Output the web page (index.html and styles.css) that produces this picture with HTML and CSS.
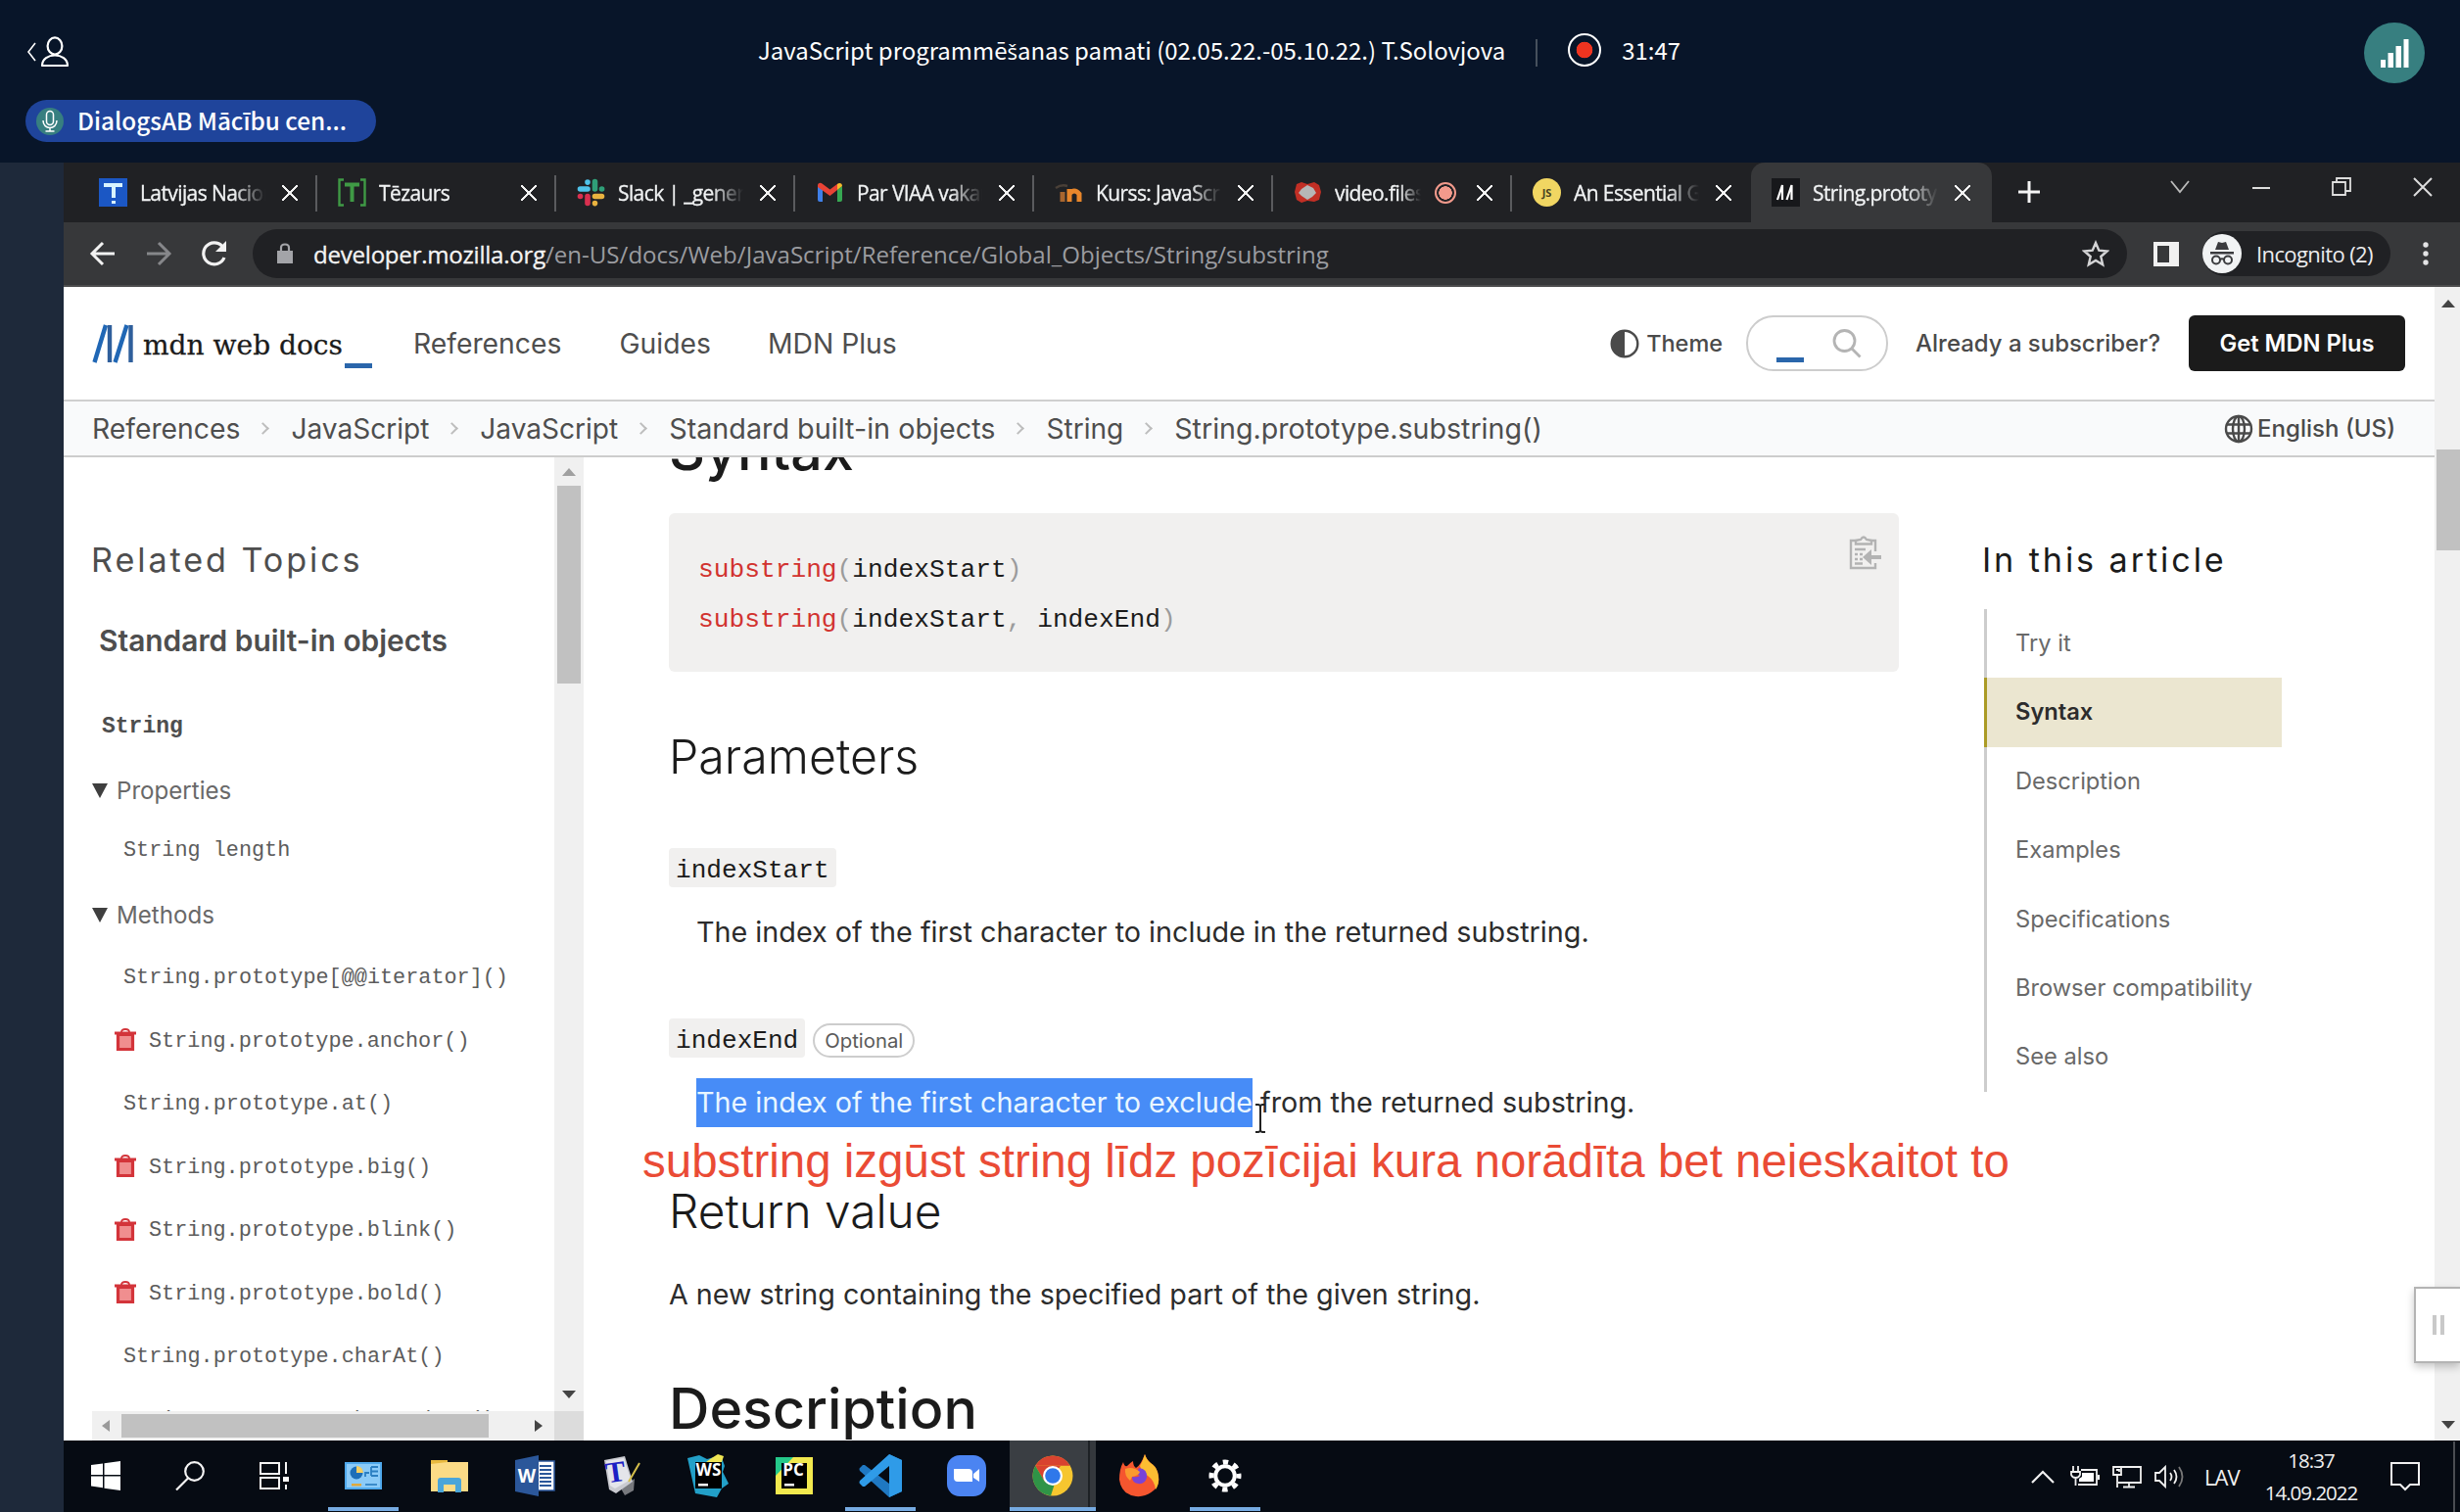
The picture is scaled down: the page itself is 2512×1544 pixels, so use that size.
FILE: index.html
```
<!DOCTYPE html>
<html lang="lv">
<head>
<meta charset="utf-8">
<title>JavaScript programmēšanas pamati</title>
<link rel="stylesheet" href="styles.css">
</head>
<body>
<div class="meeting">
  <header class="topbar">
    <div class="topbar-row">
      <svg class="users" width="46" height="34" viewBox="0 0 46 34" fill="none" stroke="#fff"><path d="M10 8 3 17l7 9" stroke-width="1.6"/><ellipse cx="30" cy="11" rx="7.4" ry="8.6" stroke-width="2.2"/><path d="M17 31c0-14 26-14 26 0z" stroke-width="2.2" stroke-linejoin="round"/></svg>
      <div class="session">
        <span class="session-title">JavaScript programmē<span class="caron">š</span>anas pamati (02.05.22.-05.10.22.) T.Solovjova</span>
        <span class="session-sep"></span>
        <span class="rec"></span>
        <span class="timer">31:47</span>
      </div>
      <div class="signal"><svg width="30" height="30" viewBox="0 0 30 30" fill="#fff"><path d="M1 22h5v8H1zM8.500 15h5.500v15H8.500zM16.500 8h5.500v22h-5.500zM24.500 1h5v29h-5z"/></svg></div>
    </div>
    <div class="talker">
      <span class="mic"><svg width="18" height="24" viewBox="0 0 18 24" fill="none" stroke="#fff" stroke-width="1.500"><rect x="5.500" y="1.500" width="7" height="14" rx="3.500"/><path d="M2 11c0 10 14 10 14 0M9 18.500V22M4.500 22h9"/></svg></span>
      <span>DialogsAB Mācību cen...</span>
    </div>
  </header>

  <div class="share">
    <div class="tabs">
      <div class="tab"><svg class="fav" viewBox="0 0 29 29"><path fill="#1b57c4" d="M0 0h29v29H0z"/><path d="M5 5h19v4h-7v11h-4V9H5zM13 23h4v3h-4z" fill="#d8f3ff"/></svg><span class="tab-title">Latvijas Nacionālā</span><i class="x"></i></div>
      <div class="tab"><svg class="fav" viewBox="0 0 29 29" fill="none" stroke="#3f9a45"><path d="M6 1.500H1.500v26H6M23 1.500h4.500v26H23" stroke-width="2.400"/><path d="M7 6.500h15M14.500 6v18" stroke-width="4"/></svg><span class="tab-title">Tēzaurs</span><i class="x"></i></div>
      <div class="tab"><svg class="fav" viewBox="0 0 29 29" stroke-width="5.600" stroke-linecap="round"><path d="M11 4v.1M11 11H3.500" stroke="#4fc3ea"/><path d="M18.500 3.500V11M25.500 11h.1" stroke="#2f9f78"/><path d="M18.500 25.500v.1M18.500 18.500h7" stroke="#e9b23f"/><path d="M11 18.500v7M3.500 18.500h.1" stroke="#d9304f"/></svg><span class="tab-title">Slack | _general</span><i class="x"></i></div>
      <div class="tab"><svg class="fav" viewBox="0 0 29 29"><path fill="#3f7fe8" d="M2 8l5 4v12H4q-2 0-2-2z"/><path fill="#37a852" d="M27 8l-5 4v12h3q2 0 2-2z"/><path fill="#e94335" d="M2 9V7.500C2 5 4.500 4 6.500 5.500l8 6 8-6C24.500 4 22 5.500 22 6v6l-7.500 6z"/><path fill="#f6bb2c" d="M22 12V6c2.500-2 5-.5 5 2z"/></svg><span class="tab-title">Par VIAA vakances</span><i class="x"></i></div>
      <div class="tab"><svg class="fav" viewBox="0 0 29 29" fill="none" stroke="#e8862b" stroke-width="5"><path d="M8 24V14" stroke="#a8662f"/><path d="M15 24V11M15 16q5-6 10 0v8"/><path d="M1 10q6-4 12-2" stroke="#4a4038" stroke-width="2.500"/></svg><span class="tab-title">Kurss: JavaScript</span><i class="x"></i></div>
      <div class="tab rec-tab"><svg class="fav" viewBox="0 0 29 29"><path fill="#c22f25" d="M3 6l5-2 6 2 7-2 5 3 2 7-2 8-5 2-7-1-6 2-5-3-2-8z"/><path fill="#b6b6b6" d="M8 11l6-4 6 3 3 5-4 4-5 3-6-4-3-3z"/></svg><span class="tab-title">video.files.fm</span><i class="cast"></i><i class="x"></i></div>
      <div class="tab nosep"><svg class="fav" viewBox="0 0 29 29"><circle cx="14.500" cy="14.500" r="14.500" fill="#f1d662"/><text x="14.500" y="19" text-anchor="middle" class="js">JS</text></svg><span class="tab-title">An Essential Guide</span><i class="x"></i></div>
      <div class="tab active"><svg class="fav" viewBox="0 0 29 29"><path fill="#17181b" d="M0 0h29v29H0z"/><path d="M6 22l5-15v15M15.500 22l5-15v15" stroke="#fff" stroke-width="2.200" fill="none"/></svg><span class="tab-title">String.prototype</span><i class="x"></i></div>
      <svg class="plus" width="24" height="24" viewBox="0 0 24 24" stroke="#f4f4f4" stroke-width="3"><path d="M12 1v22M1 12h22"/></svg>
      <div class="winctl">
        <svg width="24" height="24" viewBox="0 0 24 24" fill="none" stroke="#bbb" stroke-width="1.800"><path d="M3 6l9 11 9-11"/></svg>
        <svg width="24" height="24" viewBox="0 0 24 24" stroke="#ddd" stroke-width="2"><path d="M3 13h18"/></svg>
        <svg width="24" height="24" viewBox="0 0 24 24" fill="none" stroke="#ddd" stroke-width="1.800"><path d="M3 7h13v13H3zM7 7V3h14v13h-5"/></svg>
        <svg width="24" height="24" viewBox="0 0 24 24" stroke="#ddd" stroke-width="2"><path d="M3 3l18 18M21 3L3 21"/></svg>
      </div>
    </div>

    <div class="toolbar">
      <svg class="back" width="28" height="28" viewBox="0 0 28 28" fill="none" stroke="#f2f2f2" stroke-width="3"><path d="M26 14H4M14 3L3 14l11 11"/></svg>
      <svg class="fwd" width="28" height="28" viewBox="0 0 28 28" fill="none" stroke="#86878a" stroke-width="3"><path d="M2 14h22M14 3l11 11-11 11"/></svg>
      <svg class="reload" width="28" height="28" viewBox="0 0 28 28" fill="none" stroke="#f2f2f2" stroke-width="3.200"><path d="M24 18A11 11 0 1 1 22 6.500"/><path d="M26 1v11H15z" fill="#f2f2f2" stroke="none"/></svg>
      <div class="omnibox">
        <svg width="16" height="22" viewBox="0 0 16 22"><path d="M0 8h16v13H0z" fill="#a3a4a8"/><path d="M4 8V5q0-3.500 4-3.500T12 5v3" fill="none" stroke="#a3a4a8" stroke-width="2.200"/></svg>
        <span class="url"><b>developer.mozilla.org</b>/en-US/docs/Web/JavaScript/Reference/Global_Objects/String/substring</span>
        <svg class="star" width="28" height="28" viewBox="0 0 28 28" fill="none" stroke="#d4d4d6" stroke-width="2.400"><path d="M14 3l3.300 7.700 8.200.8-6.200 5.500 1.900 8.200L14 21l-7.200 4.200L8.700 17 2.500 11.500l8.200-.8z"/></svg>
      </div>
      <i class="panel"></i>
      <div class="incognito">
        <svg width="40" height="40" viewBox="0 0 40 40"><circle cx="20" cy="20" r="20" fill="#f1f3f4"/><path fill="#3a3b3e" d="M13 16l3-8 4 1 4-1 3 8zM8 18h24v2.400H8z"/><g fill="none" stroke="#3a3b3e" stroke-width="2"><circle cx="14" cy="26.500" r="4"/><circle cx="26" cy="26.500" r="4"/><path d="M18 26q2-1.500 4 0"/></g></svg>
        <span>Incognito (2)</span>
      </div>
      <svg class="dots" width="6" height="24" viewBox="0 0 6 24" fill="#e4e4e6"><circle cx="3" cy="3" r="2.700"/><circle cx="3" cy="12" r="2.700"/><circle cx="3" cy="21" r="2.700"/></svg>
    </div>

    <div class="viewport">
      <div class="page">
        <div class="mdn-head">
          <svg class="mark" width="44" height="40" viewBox="0 0 44 40" fill="none" stroke="#2067b5" stroke-width="4.400"><path d="M3.500 39L15 1M24.500 39L36.500 1"/><path d="M19 1v38M40.500 1v38" stroke="#2f5f9c"/></svg>
          <span class="brand">mdn web docs</span><i class="us brand-us"></i>
          <span class="nav n1">References</span><span class="nav n2">Guides</span><span class="nav n3">MDN Plus</span>
          <div class="mdn-right">
            <svg width="30" height="30" viewBox="0 0 30 30"><circle cx="15" cy="15" r="13.300" fill="#fff" stroke="#4a4a4a" stroke-width="2.400"/><path d="M15 1a14 14 0 0 0 0 28z" fill="#4a4a4a"/></svg>
            <span class="theme">Theme</span>
            <div class="search"><i class="us"></i><svg width="30" height="32" viewBox="0 0 30 32" fill="none" stroke="#b4b4b4" stroke-width="2.800"><circle cx="12.500" cy="13" r="10.500"/><path d="M20 21l8.500 8.500"/></svg></div>
            <span class="subscriber">Already a subscriber?</span>
            <span class="get">Get MDN Plus</span>
          </div>
        </div>
        <div class="crumbs">
          <span class="c1">References</span><i class="gt"></i><span class="c2">JavaScript</span><i class="gt"></i><span class="c2">JavaScript</span><i class="gt"></i><span>Standard built-in objects</span><i class="gt"></i><span class="c2">String</span><i class="gt"></i><span class="c3">String.prototype.substring()</span>
          <div class="lang"><svg width="30" height="30" viewBox="0 0 30 30" fill="none" stroke="#4a4a4a" stroke-width="2.400"><circle cx="15" cy="15" r="13"/><ellipse cx="15" cy="15" rx="6" ry="13"/><path d="M15 2v26M3 10.500h24M3 19.500h24"/></svg><span>English (US)</span></div>
        </div>

        <div class="content">
          <div class="sidebar">
            <div class="side-scroll">
              <div class="side-title">Related Topics</div>
              <div class="side-sub">Standard built-in objects</div>
              <div class="side-root">String</div>
              <div class="group g1"><i class="tri"></i>Properties</div>
              <div class="item first">String length</div>
              <div class="group g2"><i class="tri"></i>Methods</div>
              <div class="items">
                <div class="item">String.prototype[@@iterator]()</div>
                <div class="item dep"><svg class="bin" viewBox="0 0 22 24"><path d="M7 4q0-3 4-3t4 3" fill="none" stroke="#d3343a" stroke-width="1.800"/><path fill="#d3343a" d="M0 3.500h22v3H0z"/><path d="M3.500 6.500h15v15h-15z" fill="#f08e8f" stroke="#d3343a" stroke-width="3.200"/></svg>String.prototype.anchor()</div>
                <div class="item">String.prototype.at()</div>
                <div class="item dep"><svg class="bin" viewBox="0 0 22 24"><path d="M7 4q0-3 4-3t4 3" fill="none" stroke="#d3343a" stroke-width="1.800"/><path fill="#d3343a" d="M0 3.500h22v3H0z"/><path d="M3.500 6.500h15v15h-15z" fill="#f08e8f" stroke="#d3343a" stroke-width="3.200"/></svg>String.prototype.big()</div>
                <div class="item dep"><svg class="bin" viewBox="0 0 22 24"><path d="M7 4q0-3 4-3t4 3" fill="none" stroke="#d3343a" stroke-width="1.800"/><path fill="#d3343a" d="M0 3.500h22v3H0z"/><path d="M3.500 6.500h15v15h-15z" fill="#f08e8f" stroke="#d3343a" stroke-width="3.200"/></svg>String.prototype.blink()</div>
                <div class="item dep"><svg class="bin" viewBox="0 0 22 24"><path d="M7 4q0-3 4-3t4 3" fill="none" stroke="#d3343a" stroke-width="1.800"/><path fill="#d3343a" d="M0 3.500h22v3H0z"/><path d="M3.500 6.500h15v15h-15z" fill="#f08e8f" stroke="#d3343a" stroke-width="3.200"/></svg>String.prototype.bold()</div>
                <div class="item">String.prototype.charAt()</div>
                <div class="item">String.prototype.charCodeAt()</div>
              </div>
            </div>
            <div class="hbar"><i class="arr left"></i><i class="hthumb"></i><i class="arr right"></i></div>
          </div>
          <div class="vbar"><i class="arr up light"></i><i class="vthumb"></i><i class="arr down"></i><i class="corner"></i></div>

          <div class="article">
            <h2 class="h-syntax">Syntax</h2>
            <div class="code">
              <pre><em>substring</em><s>(</s>indexStart<s>)</s>
<em>substring</em><s>(</s>indexStart<s>,</s> indexEnd<s>)</s></pre>
              <svg width="34" height="36" viewBox="0 0 34 36" fill="none" stroke="#b3b3b3" stroke-width="2.400"><path d="M27 17V6H2v28h25v-5"/><path d="M7 9.500h16V6l-5-1q-3-5-6 0L7 6z" fill="#f1f0ef"/><path d="M6 15h11M6 20h3M11 20h3M6 25h3M11 25h3M6 29.500h8"/><path d="M33 23H18" stroke-width="4"/><path d="M14 23l9-8v16z" fill="#b3b3b3" stroke="none"/></svg>
            </div>
            <h3 class="h-params">Parameters</h3>
            <div class="term t1"><code>indexStart</code></div>
            <p class="def">The index of the first character to include in the returned substring.</p>
            <div class="term t2"><code>indexEnd</code><span class="opt">Optional</span></div>
            <p class="def d2"><mark>The index of the first character to exclude</mark> from the returned substring.</p>
            <h3 class="h-return">Return value</h3>
            <p class="ret">A new string containing the specified part of the given string.</p>
            <h2 class="h-desc">Description</h2>
          </div>

          <div class="toc">
            <div class="toc-title">In this article</div>
            <ul>
              <li>Try it</li><li class="on">Syntax</li><li>Description</li><li>Examples</li><li>Specifications</li><li>Browser compatibility</li><li>See also</li>
            </ul>
          </div>
        </div>
      </div>
      <div class="pagebar"><i class="arr up"></i><i class="pthumb"></i><i class="arr down"></i></div>
      <div class="drawer"><i></i><i></i></div>
    </div>

    <div class="taskbar">
      <div class="app w86"><svg width="30" height="30" viewBox="0 0 30 30" fill="#fff"><path d="M0 4l12-1.600V14H0zM13.500 2.200L30 0v14H13.500zM0 15.500h12v11.800L0 25.600zM13.500 15.500H30V30l-16.500-2.200z"/></svg></div>
      <div class="app w86"><svg width="30" height="30" viewBox="0 0 30 30" fill="none" stroke="#f4f4f4" stroke-width="2.200"><circle cx="19.500" cy="10.500" r="9.300"/><path d="M13 17.500L1 29.500"/></svg></div>
      <div class="app w86"><svg width="30" height="30" viewBox="0 0 30 30" fill="none" stroke="#f4f4f4" stroke-width="2"><path d="M1 2h19v11H1zM1 17h19v11H1zM27 1v12M27 24v5"/><path d="M24 16h6v5h-6z" fill="#fff" stroke="none"/></svg></div>
      <div class="app run"><svg width="38" height="28" viewBox="0 0 38 28"><path fill="#4fa9ec" d="M0 0h38v28H0z"/><path fill="#8bcbf8" d="M2 2h34v24H2z"/><circle cx="12" cy="11" r="6.500" fill="#1d6fb8"/><path fill="#f4cf63" d="M12 11V4a7 7 0 0 1 7 7z"/><path d="M21 15v-4h4M27 5h7M27 9.500h7M27 14h7M27 5v9" stroke="#2b7fc2" stroke-width="1.800" fill="none"/><path fill="#e0a93b" d="M7 22h10v2.500H7z"/><path fill="#3b8ccb" d="M21 22h12v2H21z"/></svg></div>
      <div class="app"><svg width="40" height="34" viewBox="0 0 40 34"><path fill="#e8b93f" d="M1 1h17v5H1z"/><path fill="#fbdb86" d="M1 5l17-2h21v30H1z"/><path fill="#4aa5d9" d="M8 34V22q0-3 3-3h18q3 0 3 3v12h-6v-8H14v8z"/></svg></div>
      <div class="app"><svg width="42" height="42" viewBox="0 0 42 42"><path fill="#fff" stroke="#2b579a" stroke-width="1.500" d="M22 6h18v30H22z"/><path d="M25 11h12M25 15h12M25 19h12M25 23h12M25 27h12M25 31h12" stroke="#2b579a" stroke-width="2"/><path fill="#2b579a" d="M0 5l24-5v42L0 37z"/><text x="12" y="28" text-anchor="middle" class="word">W</text></svg></div>
      <div class="app"><svg width="42" height="42" viewBox="0 0 42 42"><path fill="#77797e" d="M20 34l14-10-1 12-9 5z"/><path fill="#c9cad0" d="M3 5l21-4 8 26-17 12-7-4z"/><path fill="#e4e5ea" d="M5 6l18-3 7 22-16 9-5-3z"/><path d="M39 8L28 27" stroke="#d6c04c" stroke-width="2"/><text x="15" y="27" text-anchor="middle" class="tee" transform="rotate(-8 16 20)">T</text></svg></div>
      <div class="app"><svg width="44" height="44" viewBox="0 0 44 44"><path fill="#22a0c8" d="M1 4l12-3 8 4 14-4 4 11-2 6 6 12-7 5-5 9-22-4z"/><path fill="#efe553" d="M24 5l8-5 6 2-2 6H20z"/><path fill="#000" d="M9 8h27v27H9z"/><text x="22.500" y="22" text-anchor="middle" class="ide">WS</text><path fill="#fff" d="M12 30h10v2.500H12z"/></svg></div>
      <div class="app"><svg width="40" height="40" viewBox="0 0 40 40"><path fill="#f2e94e" d="M1 1h38v38H1z"/><path fill="#25c98a" d="M1 1h18L1 20z"/><path fill="#000" d="M7 7h26v26H7z"/><text x="19" y="20" text-anchor="middle" class="ide">PC</text><path fill="#fff" d="M10 28h10v2.500H10z"/></svg></div>
      <div class="app run"><svg width="44" height="44" viewBox="0 0 44 44"><path fill="#1f78c2" d="M31 0l13 6v32l-13 6L1 17q-1-2 0-3l3-3h2l25 19z"/><path fill="#2f9be8" d="M31 0l13 6v32l-13 6V12L6 33H4l-3-3q-1-1 0-3z"/></svg></div>
      <div class="app"><svg width="42" height="42" viewBox="0 0 42 42"><rect x="1" y="0" width="40" height="42" rx="13" fill="#4b84f2"/><path fill="#fff" d="M8 14h15q4 0 4 4v9H12q-4 0-4-4zM28 19l6-5v13l-6-4z"/></svg></div>
      <div class="app run current"><svg width="42" height="42" viewBox="0 0 42 42"><circle cx="21" cy="21" r="20.500" fill="#f6c62f"/><path fill="#d9432f" d="M3.200 10.800A20.500 20.500 0 0 1 38.800 10.800H21z"/><path fill="#d9432f" d="M3.200 10.800L12 26l9-5 8-10z"/><path fill="#2f9447" d="M3.200 10.800L12.500 26.500l10 4L19 41.400A20.500 20.500 0 0 1 3.200 10.800z"/><circle cx="21" cy="21" r="10" fill="#fff"/><circle cx="21" cy="21" r="7.800" fill="#2f78ea"/></svg></div>
      <div class="app"><svg width="42" height="44" viewBox="0 0 42 44"><path fill="#f5562f" d="M5 8q1 5 4 4 4-4 6-5 0 5 3 7 5-3 9-14 2 6 6 9 5 3 7 9 4 12-4 19-8 7-18 6Q3 41 1 26 1 15 5 8z"/><path fill="#fdbd32" d="M27 0q2 6 6 9 5 3 7 9 3 11-2 18-1-9-8-14-6-4-8-10 3-5 5-12z"/><path fill="#7a43d6" d="M21 14q9 1 8 10-2 7-9 6-6-1-6-7 5 1 8-1-3-1-3-3z"/><path fill="#fa9a2e" d="M7 15q8-3 15 3-1 4-8 5l-2 4q-6-5-5-12z"/></svg></div>
      <div class="app run"><svg width="34" height="34" viewBox="0 0 34 34" fill="none" stroke="#fff"><circle cx="17" cy="17" r="9.800" stroke-width="4"/><circle cx="17" cy="17" r="14" stroke-width="5" stroke-dasharray="5.500 5.496" stroke-dashoffset="2.700"/></svg></div>
      <div class="tray">
        <svg width="24" height="14" viewBox="0 0 24 14" fill="none" stroke="#f0f0f0" stroke-width="2.200"><path d="M1 13L12 2l11 11"/></svg>
        <svg class="bat" width="30" height="22" viewBox="0 0 30 22" fill="none" stroke="#f0f0f0" stroke-width="1.800"><path d="M3 0v6M8 0v6M1 6h9v3q-1 3-4.500 3T1 9zM5.500 12v8"/><path d="M11 4h16v15H8"/><path d="M12 7h12v9H9v-3l3-2zM28 9h2v5h-2z" fill="#fff" stroke="none"/></svg>
        <svg class="net" width="30" height="24" viewBox="0 0 30 24" fill="none" stroke="#f0f0f0" stroke-width="1.800"><path d="M9 2h20v16H6M1 2h8v8H1zM4 5h3v2M5 10v13M17 18v4M11 22.500h12"/></svg>
        <svg class="vol" width="30" height="24" viewBox="0 0 30 24" fill="none" stroke="#f0f0f0" stroke-width="1.800"><path d="M1 8h4l6-6v20l-6-6H1z"/><path d="M16 8q3 4 0 8M20 5q5 7 0 14"/><path d="M25 2q7 10 0 20" stroke="#777"/></svg>
        <span class="lav">LAV</span>
        <div class="clock"><span>18:37</span><span>14.09.2022</span></div>
        <svg class="note" width="30" height="30" viewBox="0 0 30 30" fill="none" stroke="#f0f0f0" stroke-width="2"><path d="M1 1h28v22H20l-5 5-5-5H1z"/></svg>
        <i class="peek"></i>
      </div>
    </div>

    <div class="caption">substring izgūst string līdz pozīcijai kura norādīta bet neieskaitot to</div>
    <svg class="ibeam" width="12" height="30" viewBox="0 0 12 30" fill="none" stroke="#222" stroke-width="2"><path d="M1 1h3l2 1 2-1h3M6 2v26M1 29h3l2-1 2 1h3"/></svg>
  </div>
</div>
</body>
</html>
```
FILE: styles.css
```
* { box-sizing: border-box; }
body { margin: 0; overflow: hidden; }
i, em, s { font-style: normal; text-decoration: none; }
svg { display: block; flex: none; }

.meeting { width: 2512px; height: 1544px; background: #1e293a; display: flex; flex-direction: column; overflow: hidden; }
.topbar { height: 166px; flex: none; background: #081529; color: #fff; font-family: "Noto Sans CJK SC", sans-serif; }
.topbar-row { height: 102px; display: flex; align-items: flex-start; padding: 0 36px 0 26px; }
.users { margin-top: 36px; }
.session { display: flex; align-items: center; margin-left: 702px; height: 102px; font-size: 23.94px; white-space: nowrap; }
.session-title, .timer { line-height: 40px; }
.caron { font: 22px/30px "Open Sans", sans-serif; }
.session-sep { width: 2px; height: 28px; margin: 6px 31px 0 31px; background: #46505c; }
.rec { width: 34px; height: 34px; border: 2px solid #fff; border-radius: 50%; background: radial-gradient(circle, #ee3420 8px, transparent 8.6px); margin-right: 21px; }
.signal { width: 62px; height: 62px; margin: 23px 0 0 auto; border-radius: 50%; background: #377f80; display: flex; align-items: center; justify-content: center; }
.talker { width: 358px; height: 43px; margin-left: 26px; border-radius: 21.5px; background: #1f449b; display: flex; align-items: center; gap: 14px; padding: 0 0 2px 11px; font-size: 24.32px; font-weight: 500; line-height: 36px; white-space: nowrap; }
.mic { width: 28px; height: 28px; margin-top: 2px; border-radius: 50%; background: #377f80; display: flex; align-items: center; justify-content: center; flex: none; }

.share { position: relative; flex: 1; margin-left: 65px; display: flex; flex-direction: column; min-height: 0; }
.tabs { height: 61px; flex: none; background: #202124; display: flex; padding-left: 15px; font: 21px/30px "Open Sans", sans-serif; letter-spacing: -.6px; color: #f1f3f4; }
.tab { width: 244px; height: 61px; display: flex; align-items: center; padding: 0 20px 0 21px; background: linear-gradient(#5a5b5e, #5a5b5e) no-repeat right 13px / 2px 37px; }
.tab.nosep { background: none; }
.tab.active { background: #37383a; border-radius: 14px 14px 0 0; width: 246px; padding-right: 22px; }
.fav { width: 29px; height: 29px; margin-right: 13px; }
.tab-title { width: 128px; overflow: hidden; white-space: nowrap; -webkit-text-stroke: .3px; -webkit-mask-image: linear-gradient(90deg, #000 75%, transparent); mask-image: linear-gradient(90deg, #000 75%, transparent); }
.rec-tab .tab-title { width: 88px; }
.js { font: bold 11px "Open Sans", sans-serif; fill: #4a4321; letter-spacing: 0; }
.cast { width: 22px; height: 22px; margin: 0 0 0 14px; border-radius: 50%; border: 2px solid #f29a8c; background: radial-gradient(circle, #f29a8c 6.500px, #202124 7px); }
.x { width: 16px; height: 16px; margin-left: auto; background: linear-gradient(45deg, transparent 44%, #f1f1f1 45% 55%, transparent 56%), linear-gradient(-45deg, transparent 44%, #f1f1f1 45% 55%, transparent 56%); }
.plus { margin: 18px 0 0 26px; }
.winctl { display: flex; gap: 58.500px; margin: 13px 0 0 130px; }

.toolbar { height: 66px; flex: none; background: #37383a; display: flex; align-items: center; border-bottom: 2px solid #4c4c4d; padding-left: 26px; font-family: "Open Sans", sans-serif; }
.fwd { margin-left: 29px; }
.reload { margin-left: 29px; }
.omnibox { width: 1914px; height: 50px; margin-left: 25px; border-radius: 25px; background: #202124; display: flex; align-items: center; padding: 0 18px 0 25px; }
.url { margin-left: 21px; padding-top: 1px; font-size: 24.07px; line-height: 34px; color: #9b9ca0; white-space: nowrap; }
.url b { font-weight: 400; color: #f4f4f4; letter-spacing: -.24px; -webkit-text-stroke: .3px; }
.star { margin-left: auto; }
.panel { width: 26px; height: 25px; margin-left: 27px; border: 4px solid #f1f1f1; border-right-width: 10px; }
.incognito { width: 192px; height: 46px; margin-left: 24px; border-radius: 23px; background: #202124; display: flex; align-items: center; gap: 15px; font-size: 22px; letter-spacing: -.6px; color: #ececee; white-space: nowrap; }
.dots { margin-left: 33px; }

.viewport { position: relative; flex: 1; display: flex; min-height: 0; background: #fff; }
.page { width: 2421px; display: flex; flex-direction: column; font-family: Inter, sans-serif; color: #1b1b1b; }
.mdn-head { height: 117px; flex: none; display: flex; align-items: center; border-bottom: 2px solid #cfcfcf; padding: 0 30px 0 28px; white-space: nowrap; }
.brand { margin: 4px 0 0 9px; font: 28.05px/40px "DejaVu Serif", serif; width: 206px; -webkit-text-stroke: .3px; }
.us { width: 28px; height: 5px; background: #2a66ab; flex: none; }
.brand-us { margin-top: 46px; }
.nav { font-size: 28.300px; color: #4e4e4e; padding-top: 1px; }
.n1 { margin-left: 42px; } .n2 { margin-left: 59px; } .n3 { margin-left: 58px; }
.mdn-right { display: flex; align-items: center; margin-left: auto; color: #4a4a4a; font-weight: 500; }
.theme { margin-left: 7px; font-size: 23.500px; }
.search { width: 145px; height: 57px; margin-left: 24px; border: 2px solid #cdcdcd; border-radius: 28px; display: flex; align-items: center; padding: 0 25px 0 29px; justify-content: space-between; }
.search .us { margin-top: 34px; }
.subscriber { margin-left: 28px; font-size: 23.950px; }
.get { width: 221px; height: 57px; margin-left: 29px; border-radius: 6px; background: #1b1b1b; color: #fff; font-size: 23.690px; font-weight: 600; line-height: 58px; text-align: center; }

.crumbs { height: 57px; flex: none; display: flex; align-items: center; background: #f9fafb; border-bottom: 2px solid #cdcdcd; padding: 0 40px 0 29px; font-size: 28.750px; color: #4e4e4e; white-space: nowrap; }
.c1 { font-size: 28.300px; } .c2 { font-size: 28.050px; } .c3 { font-size: 28.620px; }
.gt { width: 9px; height: 9px; margin: 0 24px 0 19px; border: solid #bdbdbd; border-width: 2px 2px 0 0; transform: rotate(45deg); }
.lang { display: flex; align-items: center; gap: 4px; margin-left: auto; font-size: 24.070px; font-weight: 500; color: #4a4a4a; }

.content { flex: 1; display: flex; min-height: 0; overflow: hidden; }
.sidebar { width: 501px; display: flex; flex-direction: column; color: #4e4e4e; padding-left: 29px; flex: none; white-space: nowrap; }
.side-scroll { height: 974px; overflow: hidden; }
.side-title { height: 60px; margin-top: 75px; font-size: 34.200px; line-height: 60px; letter-spacing: 2.900px; font-weight: 400; margin-left: -1px; }
.side-sub { margin: 27px 0 0 7px; font-size: 29.900px; font-weight: 600; line-height: 50px; }
.side-root { margin: 42.500px 0 0 10px; font: bold 23px/40px "Liberation Mono", monospace; }
.group { height: 40px; display: flex; align-items: center; font-size: 24.100px; color: #696969; }
.g1 { margin-top: 25.500px; } .g2 { margin-top: 12.500px; }
.tri { border: solid transparent; border-width: 15px 8px 0; border-top-color: #3f3f3f; margin-right: 9px; }
.item { height: 64.500px; display: flex; align-items: center; padding-left: 32px; font: 21.830px/30px "Liberation Mono", monospace; color: #5c5c5c; }
.item.first { margin-top: 10px; }
.item.dep { padding-left: 23px; }
.bin { width: 22px; height: 24px; margin: -3px 13px 0 0; }
.items { margin-top: 13.200px; }
.hbar { height: 30px; background: #f0f0f0; display: flex; align-items: center; padding: 0 12px 0 10px; }
.hthumb { width: 375px; height: 24px; background: #c1c1c1; margin-left: 12px; }
.arr { flex: none; width: 0; height: 0; border: 7px solid transparent; }
.left { border-width: 6px 8px 6px 0; border-right-color: #9a9a9a; }
.right { border-width: 6px 0 6px 8px; border-left-color: #444; margin-left: auto; }
.up { border-width: 0 7px 8px; border-bottom-color: #444; }
.up.light { border-bottom-color: #a0a0a0; }
.down { border-width: 8px 7px 0; border-top-color: #444; margin-top: auto; }
.vbar { width: 30px; flex: none; background: #f0f0f0; display: flex; flex-direction: column; align-items: center; padding-top: 11px; }
.vthumb { width: 24px; height: 202px; margin-top: 10px; background: #c1c1c1; }
.corner { width: 30px; height: 30px; margin-top: 13px; background: #dcdcdc; }

.article { width: 1256px; margin-left: 87px; flex: none; }
h2, h3, p, pre, ul { margin: 0; }
h2 { font-size: 57.350px; line-height: 60px; font-weight: 500; letter-spacing: 0; }
h3 { font-size: 48.300px; line-height: 58px; font-weight: 300; }
.h-syntax { margin-top: -38px; }
.code { height: 162px; margin-top: 35px; border-radius: 6px; background: #f1f0ef; padding: 33px 17px 0 30px; display: flex; justify-content: space-between; }
.code pre { font: 26.230px/50.600px "Liberation Mono", monospace; }
.code svg { margin-top: -11px; }
.code em { color: #d2332f; } .code s { color: #9b9b9b; }
.h-params { margin-top: 57.500px; }
.term { display: flex; height: 40px; }
.t1 { margin-top: 64.500px; } .t2 { margin-top: 63px; }
code { height: 40px; border-radius: 4px; background: #f1f0ef; padding: 6px 7px 0 7px; font: 26.100px/34px "Liberation Mono", monospace; }
.opt { width: 104px; height: 35px; margin: 5px 0 0 8px; border: 2px solid #cdcdcd; border-radius: 18px; font-size: 20.300px; line-height: 31px; text-align: center; color: #5a5a5a; }
.def, .ret { font-size: 28.740px; line-height: 50px; color: #2c2c2c; white-space: nowrap; }
.def { margin: 21px 0 0 28px; }
.d2 { margin-top: 20.500px; }
mark { display: inline-block; height: 50px; background: #478cf7; color: #e9f6ff; }
.h-return { margin-top: 57.600px; font-size: 47.800px; }
.ret { margin-top: 31px; font-size: 28.700px; }
.h-desc { margin-top: 60.500px; }

.toc { margin-left: 87px; width: 304px; }
.toc-title { height: 60px; margin-top: 75px; font-size: 34.200px; line-height: 60px; letter-spacing: 2.900px; white-space: nowrap; margin-left: -2px; }
.toc ul { list-style: none; padding: 0; margin-top: 20px; }
.toc li { height: 70.400px; border-left: 3px solid #cdcdcd; padding-left: 29px; font-size: 23.660px; line-height: 70px; color: #696969; white-space: nowrap; }
.toc .on { background: #ebe6d0; border-left-color: #ab9b25; color: #2c2c2c; font-weight: 600; }

.pagebar { width: 26px; background: #f0f0f0; display: flex; flex-direction: column; align-items: center; padding: 13px 0 12px 2px; }
.pthumb { width: 24px; height: 103px; margin-top: 145px; background: #c1c1c1; }
.drawer { position: absolute; right: 0; top: 1021px; width: 47px; height: 78px; background: #fff; border: 2px solid #b4b4b4; border-right: 0; box-shadow: 0 4px 8px rgba(0, 0, 0, .22); display: flex; align-items: center; gap: 4px; padding-left: 17px; }
.drawer i { width: 4px; height: 20px; background: #c9c9c9; }

.taskbar { height: 73px; flex: none; background: #060b13; display: flex; font-family: "Open Sans", sans-serif; color: #f0f0f0; }
.app { width: 88px; height: 72px; display: flex; align-items: center; justify-content: center; }
.w86 { width: 86px; padding-top: 0; }
.w86 + .run { margin-left: 4px; }
.run { background: linear-gradient(#76abe2, #76abe2) no-repeat center bottom / 72px 4px; }
.current { background: linear-gradient(#76abe2, #76abe2) no-repeat left bottom / 100% 4px, linear-gradient(90deg, #3a3e43 91%, #1d2125 91% 93%, #34383d 93%); }
.word { font: bold 19px "Open Sans", sans-serif; fill: #fff; }
.tee { font: bold 30px "Liberation Serif", serif; fill: #1c1fc4; }
.ide { font: bold 17px "Open Sans", sans-serif; fill: #fff; }
.tray { flex: 1; display: flex; align-items: center; justify-content: flex-start; padding-left: 779px; font-size: 20.500px; letter-spacing: -1px; }
.bat { margin-left: 16px; }
.net { margin-left: 13px; }
.vol { margin-left: 13px; }
.lav { margin-left: 21px; font-size: 22px; width: 38px; }
.clock { width: 110px; margin-left: 16px; display: flex; flex-direction: column; align-items: center; line-height: 33px; }
.note { margin-left: 26px; }
.peek { width: 2px; height: 72px; background: #4a4d52; margin-left: 34px; }

.caption { position: absolute; left: 591px; top: 990px; font: 47.480px/60px "Liberation Sans", sans-serif; color: #ea4b35; white-space: nowrap; }
.ibeam { position: absolute; left: 1216px; top: 961px; }
```
